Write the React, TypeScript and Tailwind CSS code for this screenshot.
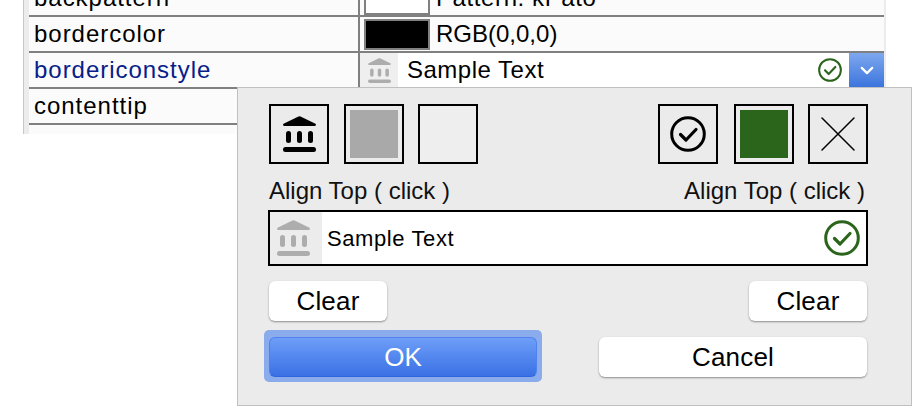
const FONT = "font-['Liberation_Sans',Arial,sans-serif]";

function BankIcon({ className }: { className?: string }) {
  return (
    <svg viewBox="0 0 33 36" className={className} fill="currentColor">
      <path d="M15.500.5a2 2 0 0 1 2 0L32 7.500c1.600.8 1 2.500-.5 2.500h-30C0 10-.6 8.300 1 7.500z" />
      <rect x="3" y="15" width="5" height="12" rx="2.500" />
      <rect x="14" y="15" width="5" height="12" rx="2.500" />
      <rect x="25" y="15" width="5" height="12" rx="2.500" />
      <rect x="0" y="31" width="33" height="5" rx="2.500" />
    </svg>
  );
}

function CheckCircle({ className }: { className?: string }) {
  return (
    <svg viewBox="0 0 36 36" className={className} fill="none" stroke="currentColor">
      <circle cx="18" cy="18" r="16.300" strokeWidth="3" />
      <path d="M10.500 18.500l5.500 5.500L26 13.500" strokeWidth="3.200" strokeLinecap="round" strokeLinejoin="round" />
    </svg>
  );
}

function Row({ name, active, children }: { name: string; active?: boolean; children: React.ReactNode }) {
  return (
    <div className="flex h-[36px] border-b-2 border-[#808080]">
      <div className={`w-[329px] pl-[5px] leading-[34px] tracking-[0.97px] ${active ? 'text-[#06208a]' : 'text-black'}`}>{name}</div>
      <div className={`flex-1 flex items-center border-l-2 border-[#808080] min-w-0 ${active ? 'bg-white' : ''}`}>{children}</div>
    </div>
  );
}

function Swatch({ children, className }: { children?: React.ReactNode; className?: string }) {
  return <div className={`w-[60px] h-[60px] border-2 border-black flex items-center justify-center ${className ?? ''}`}>{children}</div>;
}

function MacButton({ label, className }: { label: string; className?: string }) {
  return (
    <button className={`h-[40px] rounded-[6px] bg-white shadow-[0_1px_2px_rgba(0,0,0,0.4)] text-black text-center text-[26px] tracking-[0.2px] ${className ?? ''}`}>
      {label}
    </button>
  );
}

export default function App() {
  return (
    <div className={`relative w-[916px] h-[416px] overflow-hidden bg-white text-[24px] tracking-[0.5px] ${FONT}`}>
      {/* property table */}
      <div className="ml-[23px] w-[863px] h-[134px] flex bg-[#ececec]">
        <div className="w-[6px] border-l border-[#c8c8c8]" />
        <div className="w-[855px] bg-[#fbfbfb]">
          <div className="h-[17px] border-b-2 border-[#808080] flex overflow-hidden">
            <div className="w-[329px] pl-[5px] leading-[34px] -mt-[19px] tracking-[0.97px]">backpattern</div>
            <div className="flex-1 flex border-l-2 border-[#808080] -mt-[19px]">
              <div className="w-[66px] h-[34px] ml-[4px] bg-white border-2 border-[#808080]" />
              <span className="ml-[6px] leading-[34px] tracking-[0.6px]">Pattern: kPato</span>
            </div>
          </div>
          <Row name="bordercolor">
            <div className="w-[66px] h-[31px] ml-[4px] bg-black border-2 border-[#808080]" />
            <span className="ml-[6px] tracking-normal">RGB(0,0,0)</span>
          </Row>
          <Row name="bordericonstyle" active>
            <div className="w-[38px] h-full bg-[#efefef] flex items-center justify-center shrink-0">
              <BankIcon className="w-[23px] h-[25px] text-[#adadad]" />
            </div>
            <span className="ml-[9px] flex-1">Sample Text</span>
            <CheckCircle className="w-[24px] h-[24px] text-[#2b651c] mr-[7px]" />
            <div className="w-[35px] h-full bg-gradient-to-b from-[#7ea7ee] to-[#3b75dd] flex items-center justify-center">
              <svg viewBox="0 0 16 10" className="w-[14px] h-[9px]" fill="none" stroke="white" strokeWidth="2.500" strokeLinecap="round" strokeLinejoin="round">
                <path d="M2 2l6 6 6-6" />
              </svg>
            </div>
          </Row>
          <Row name="contenttip">
            <span />
          </Row>
        </div>
        <div className="w-[2px] bg-[#ececec]" />
      </div>

      {/* popup editor, lies over the table */}
      <div className="absolute left-[237px] top-[87px] w-[675px] h-[319px] bg-[#ebebeb] border border-[#c0c0c0] pl-[31px] pr-[43px] pt-[16px]">
        <div className="flex w-[599px]">
          <Swatch><BankIcon className="w-[33px] h-[36px] text-black" /></Swatch>
          <Swatch className="ml-[15px]"><div className="w-[48px] h-[48px] bg-[#a9a9a9]" /></Swatch>
          <Swatch className="ml-[14px] bg-[#eeeeee]" />
          <div className="flex-1" />
          <Swatch><CheckCircle className="w-[36px] h-[36px] text-black" /></Swatch>
          <Swatch className="ml-[16px]"><div className="w-[48px] h-[48px] bg-[#2b651c]" /></Swatch>
          <Swatch className="ml-[14px]">
            <svg viewBox="0 0 34 34" className="w-[34px] h-[34px]" stroke="black" strokeWidth="1.500" strokeLinecap="round">
              <path d="M1 1l32 32M33 1L1 33" />
            </svg>
          </Swatch>
        </div>
        <div className="flex justify-between w-[596px] mt-[13px] leading-[28px] text-[#111] tracking-normal">
          <span>Align Top ( click )</span>
          <span>Align Top ( click )</span>
        </div>
        <div className="flex items-center w-[600px] h-[56px] mt-[5px] -ml-px bg-white border-2 border-black">
          <div className="w-[52px] h-full bg-[#ececec] flex items-center justify-center pr-[5px]">
            <BankIcon className="w-[33px] h-[36px] text-[#adadad]" />
          </div>
          <span className="ml-[5px] flex-1 text-[22px] tracking-[0.6px]">Sample Text</span>
          <CheckCircle className="w-[36px] h-[36px] text-[#2b651c] mr-[6px]" />
        </div>
        <div className="flex justify-between w-[598px] mt-[15px]">
          <MacButton label="Clear" className="w-[118px]" />
          <MacButton label="Clear" className="w-[118px]" />
        </div>
        <div className="flex justify-between items-end w-[598px] mt-[9px]">
          <div className="w-[278px] h-[52px] -ml-[5px] pt-[7px] px-[5px] rounded-[5px] bg-[#8aabec]">
            <button className="w-full h-[40px] rounded-[6px] border border-[#4f82ee] border-b-[#2f66e0] bg-gradient-to-b from-[#6e9ef8] to-[#3a70e4] text-white text-[26px] tracking-normal">OK</button>
          </div>
          <MacButton label="Cancel" className="w-[268px] mb-[5px]" />
        </div>
      </div>
    </div>
  );
}
